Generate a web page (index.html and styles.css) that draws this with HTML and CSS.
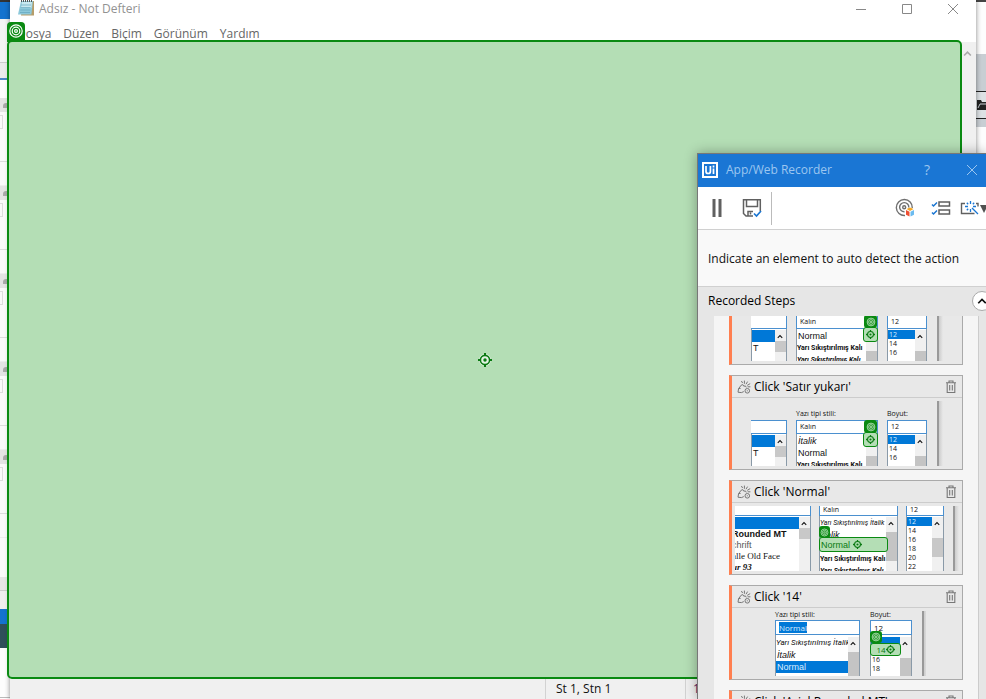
FILE: index.html
```html
<!DOCTYPE html>
<html lang="tr">
<head>
<meta charset="utf-8">
<title>Adsız - Not Defteri</title>
<link rel="stylesheet" href="styles.css">
</head>
<body>
<svg width="0" height="0" class="defs" aria-hidden="true">
  <symbol id="rings" viewBox="0 0 16 16"><g fill="none" stroke="currentColor" stroke-width="1.2"><circle cx="8" cy="8" r="6.2"/><circle cx="8" cy="8" r="3.8"/><circle cx="8" cy="8" r="1.4"/></g></symbol>
  <symbol id="aim" viewBox="0 0 14 14"><circle cx="7" cy="7" r="4.6" fill="none" stroke="currentColor" stroke-width="1.6"/><circle cx="7" cy="7" r="1.7" fill="currentColor"/><path d="M7 0v2.4M7 11.6V14M0 7h2.4M11.6 7H14" stroke="currentColor" stroke-width="2"/></symbol>
  <symbol id="up" viewBox="0 0 8 6"><path d="M1 4.8 4 1.8l3 3" fill="none" stroke="currentColor" stroke-width="1.4"/></symbol>
  <symbol id="click" viewBox="0 0 14 14"><g fill="none" stroke="currentColor"><path d="M4.2 5.2 1.6 8.6 1 12.2l3.4.4 2.4-1M4.2 5.2l1.6-.6 1 1.6 1.6-.3.9 1.5M1.6 8.6l2-.2"/><circle cx="10.3" cy="10.8" r="2.3"/><path d="M10.3 10.3v1M7.4 3.8V.6M9 4.2l1.6-2.6M10.2 5.4l3-1.800M5.600 3 4.400 1M10.600 6.800h2.800"/></g></symbol>
  <symbol id="trash" viewBox="0 0 12 14"><path d="M1 2.700h10M4 2.500V1h4v1.500M2.200 3v9.500h7.600V3M4.700 5v5.500M7.300 5v5.500" fill="none" stroke="currentColor" stroke-width="1.1"/></symbol>
</svg>
<main class="desktop">
  <div class="backdrop" aria-hidden="true">
    <i class="b-dark"></i><i class="b-blue"></i><i class="b-tabs"></i><i class="b-row"></i><i class="b-gap"></i>
    <i class="b-group"></i><i class="b-group"></i><i class="b-group"></i><i class="b-group"></i><i class="b-group"></i>
    <i class="b-foot"></i><i class="b-accent"></i><i class="b-teal"></i><i class="b-rest"></i>
  </div>
  <div class="backdrop backdrop-right" aria-hidden="true">
    <i class="r-top"></i><i class="r-grey"></i>
    <i class="r-folder"><svg width="10" height="12" viewBox="0 0 10 12"><path d="M1 1h4l1 2h4v8H1z" fill="#222"/><path d="M2 9 4 5h6" fill="none" stroke="#c8ced3"/></svg></i>
    <i class="r-end"></i>
  </div>

  <section class="notepad">
    <header class="np-title">
      <svg width="17" height="17" viewBox="0 0 17 17"><path d="M5 1h11v14.500H3z" fill="#b59d6a"/><path d="M3 1h12l-1.600 13.500H0z" fill="#8cc8da"/><path d="M4 2h10l-.7 6H3z" fill="#c8e8f0"/><path d="M3 5h10M2.700 7.500h10M2.300 10h10M2 12.500h10" stroke="#64a6bd" stroke-width=".7"/><path d="M3 1h12" stroke="#555" stroke-width="2" stroke-dasharray="1 1"/></svg>
      <h1>Adsız - Not Defteri</h1>
      <button aria-label="Simge durumuna küçült"><svg width="12" height="12"><path d="M1 6.500h10" stroke="#888"/></svg></button>
      <button aria-label="Ekranı kapla"><svg width="12" height="12"><path d="M1.500 1.500h9v9h-9z" fill="none" stroke="#888"/></svg></button>
      <button aria-label="Kapat"><svg width="12" height="12"><path d="m1 1 10 10M11 1 1 11" stroke="#888"/></svg></button>
    </header>
    <nav class="np-menu"><button>Dosya</button><button>Düzen</button><button>Biçim</button><button>Görünüm</button><button>Yardım</button></nav>
    <div class="np-body"><textarea aria-label="Metin"></textarea><div class="np-scroll"><svg width="9" height="7"><use href="#up"/></svg></div></div>
    <footer class="np-status"><span></span><span>St 1, Stn 1</span><span>100%</span></footer>
  </section>

  <div class="highlight">
    <span class="tag"><svg width="16" height="16"><use href="#rings"/></svg></span>
    <svg class="mid" width="14" height="14" viewBox="0 0 14 14"><circle cx="7" cy="7" r="6" fill="#e3f3e3"/><use href="#aim"/></svg>
  </div>

  <section class="recorder">
    <header class="rec-title">
      <svg width="16" height="16" viewBox="0 0 16 16" fill="none" stroke="#fff"><path d="M1 1h14v14H1z" stroke-width="2"/><path d="M4 4v5.500q0 2 2.200 2t2.200-2V4M11.500 6.500V12M11.500 3.500v2" stroke-width="1.700"/></svg>
      <h2>App/Web Recorder</h2>
      <button aria-label="Help">?</button>
      <button aria-label="Close"><svg width="12" height="12"><path d="m1 1 10 10M11 1 1 11" stroke="#9cc6f0"/></svg></button>
    </header>
    <div class="rec-tools">
      <button aria-label="Pause"><svg width="10" height="18"><path d="M2 0v18M8 0v18" stroke="#606060" stroke-width="3"/></svg></button>
      <button aria-label="Save"><svg width="20" height="20" viewBox="0 0 20 20" fill="none" stroke="#606060" stroke-width="1.500"><path d="M11 18H4l-2.500-2.500V1.700h16.800V13M4.500 2v6.500h11V2M6 18v-4.500h5M8.500 14.500v2"/><path d="m12 15.500 2.500 2.500 4.500-5" stroke="#1a76d2" stroke-width="1.700"/></svg></button>
      <i class="rule"></i>
      <button aria-label="Computer vision"><svg width="20" height="20" viewBox="0 0 20 20" fill="none" stroke="#707070" stroke-width="1.400"><path d="M10 17.500A8 8 0 1 1 17.300 10M9.500 13.800A4.600 4.600 0 1 1 13.800 9.500"/><circle cx="9.200" cy="9.300" r="1.500"/><g stroke="none"><path d="m11.500 11 3.500-1.500 3.500 1.500-3.500 2z" fill="#f5a623"/><path d="m11 12 3.500 1.700v4.800L11 16.800z" fill="#ee5034"/><path d="m15.500 13.700 3.500-1.700v4.800l-3.500 1.700z" fill="#6cbcf0"/></g></svg></button>
      <button aria-label="Steps"><svg width="20" height="16" viewBox="0 0 20 16" fill="none"><path d="M8 2h10.500v4H8zM8 10h10.500v4H8z" stroke="#606060" stroke-width="1.500"/><path d="m1 4.500 1.500 1.500L6 2.500M1 12.500 2.500 14 6 10.500" stroke="#1a76d2" stroke-width="1.500"/></svg></button>
      <button aria-label="Options" class="last"><svg width="26" height="16" viewBox="0 0 26 16" fill="none"><path d="M5 3.500H1.500v10h13M16 3.500h2v3" stroke="#606060" stroke-width="1.400"/><path d="M10.500 1v3M10.500 9v3M5 6.500h3M13 6.500h3M6.800 2.800l1.400 1.400M14.200 2.800l-1.400 1.400M6.800 10.200l1.400-1.400M12 8l6 6" stroke="#1a76d2" stroke-width="1.300"/><path d="M20 5h8l-4 8z" fill="#505050"/></svg></button>
    </div>
    <p class="rec-hint">Indicate an element to auto detect the action</p>
    <div class="rec-head"><h3>Recorded Steps</h3><button aria-label="Collapse"><svg width="10" height="8" viewBox="0 0 8 6"><use href="#up"/></svg></button></div>
    <div class="rec-list">
      <ol>
        <li class="step">
          <div class="step-head"></div>
          <div class="shot font-shot">
            <div class="col c-face"><b class="cap"></b><span class="field"></span><div class="box"><ul><li class="sel"></li><li>T</li></ul><i class="bar"><svg width="6" height="5"><use href="#up"/></svg></i></div></div>
            <div class="col c-style"><b class="cap"></b><span class="field">Kalın</span><div class="box"><ul><li>Normal</li><li class="narrow bold">Yarı Sıkıştırılmış Kalı</li><li class="narrow bold ital">Yarı Sıkıştırılmış Kalı</li></ul><i class="bar low"></i></div><span class="mark"><svg width="10" height="10"><use href="#rings"/></svg></span><span class="hit"><svg width="9" height="9"><use href="#aim"/></svg></span></div>
            <div class="col c-size"><b class="cap"></b><span class="field">12</span><div class="box tight"><ul><li class="sel">12</li><li>14</li><li>16</li></ul><i class="bar low"><svg width="6" height="5"><use href="#up"/></svg></i></div></div>
            <i class="edge"></i>
          </div>
        </li>
        <li class="step">
          <div class="step-head"><svg width="14" height="14"><use href="#click"/></svg><h4>Click 'Satır yukarı'</h4><button aria-label="Delete"><svg width="12" height="14"><use href="#trash"/></svg></button></div>
          <div class="shot font-shot">
            <div class="col c-face"><b class="cap"></b><span class="field"></span><div class="box"><ul><li class="sel"></li><li>T</li></ul><i class="bar"><svg width="6" height="5"><use href="#up"/></svg></i></div></div>
            <div class="col c-style"><b class="cap">Yazı tipi stili:</b><span class="field">Kalın</span><div class="box"><ul><li class="ital">İtalik</li><li>Normal</li><li class="narrow bold">Yarı Sıkıştırılmış Kalı</li></ul><i class="bar low"></i></div><span class="mark"><svg width="10" height="10"><use href="#rings"/></svg></span><span class="hit"><svg width="9" height="9"><use href="#aim"/></svg></span></div>
            <div class="col c-size"><b class="cap">Boyut:</b><span class="field">12</span><div class="box tight"><ul><li class="sel">12</li><li>14</li><li>16</li></ul><i class="bar low"><svg width="6" height="5"><use href="#up"/></svg></i></div></div>
            <i class="edge"></i>
          </div>
        </li>
        <li class="step">
          <div class="step-head"><svg width="14" height="14"><use href="#click"/></svg><h4>Click 'Normal'</h4><button aria-label="Delete"><svg width="12" height="14"><use href="#trash"/></svg></button></div>
          <div class="shot normal-shot">
            <div class="col c-face"><span class="field"></span><div class="box"><ul><li class="sel"></li><li class="bold">Rounded MT</li><li class="light">chrift</li><li class="serif">alle Old Face</li><li class="serif bold ital">ur 93</li></ul><i class="bar"><svg width="6" height="5"><use href="#up"/></svg></i></div></div>
            <div class="col c-style"><span class="field">Kalın</span><div class="box"><ul><li class="narrow ital">Yarı Sıkıştırılmış İtalik</li><li class="ital">İtalik</li><li></li><li class="narrow bold">Yarı Sıkıştırılmış Kalı</li><li class="narrow bold ital">Yarı Sıkıştırılmış Kalı</li></ul><i class="bar tall"><svg width="6" height="5"><use href="#up"/></svg></i></div><span class="mark"><svg width="9" height="9"><use href="#rings"/></svg></span><span class="hit">Normal <svg width="9" height="9"><use href="#aim"/></svg></span></div>
            <div class="col c-size"><span class="field">12</span><div class="box tight"><ul><li class="sel">12</li><li>14</li><li>16</li><li>18</li><li>20</li><li>22</li></ul><i class="bar mid-bar"><svg width="6" height="5"><use href="#up"/></svg></i></div></div>
            <i class="edge"></i>
          </div>
        </li>
        <li class="step">
          <div class="step-head"><svg width="14" height="14"><use href="#click"/></svg><h4>Click '14'</h4><button aria-label="Delete"><svg width="12" height="14"><use href="#trash"/></svg></button></div>
          <div class="shot size-shot">
            <div class="col c-style"><b class="cap">Yazı tipi stili:</b><span class="field"><mark>Normal</mark></span><div class="box"><ul><li class="narrow ital">Yarı Sıkıştırılmış İtalik</li><li class="ital">İtalik</li><li class="sel">Normal</li></ul><i class="bar tall"><svg width="6" height="5"><use href="#up"/></svg></i></div></div>
            <div class="col c-size"><b class="cap">Boyut:</b><span class="field">12</span><div class="box tight"><ul><li class="sel"></li><li></li><li>16</li><li>18</li></ul><i class="bar low"><svg width="6" height="5"><use href="#up"/></svg></i></div><span class="mark"><svg width="10" height="10"><use href="#rings"/></svg></span><span class="hit">14<svg width="9" height="9"><use href="#aim"/></svg></span></div>
            <i class="edge"></i>
          </div>
        </li>
        <li class="step">
          <div class="step-head"><svg width="14" height="14"><use href="#click"/></svg><h4>Click 'Arial Rounded MT'</h4><button aria-label="Delete"><svg width="12" height="14"><use href="#trash"/></svg></button></div>
        </li>
      </ol>
    </div>
  </section>
</main>
</body>
</html>
```
FILE: styles.css
```css
* { box-sizing: border-box; }
body { margin: 0; font: 12px/16px "Open Sans", "Noto Sans", sans-serif; color: #111; }
h1, h2, h3, h4, p, ol, ul { margin: 0; padding: 0; font-size: inherit; font-weight: inherit; list-style: none; }
button { display: flex; align-items: center; justify-content: center; flex: none; margin: 0; padding: 0; border: 0; background: none; font: inherit; color: inherit; }
svg { display: block; flex: none; }
i { font-style: normal; }
.defs { position: absolute; }
.desktop { position: relative; height: 100vh; overflow: hidden; background: #fdfdfd; }

/* Windows behind the editor */
.backdrop { position: absolute; left: 0; top: 0; bottom: 0; width: 10px; display: flex; flex-direction: column; }
.backdrop i { flex: none; }
.b-dark { height: 2px; background: #333; }
.b-blue { height: 17px; background: #1473cf; }
.b-tabs { height: 44px; background: #f4f4f4; border-bottom: 1px solid #ccc; }
.b-row { height: 17px; background: #ebebeb; border-bottom: 2px solid #4b86c6; }
.b-gap { height: 18px; }
.b-group { height: 88px; border-bottom: 1px solid #eee; background: linear-gradient(#e4e4e4 14px, #fafafa 14px 63px, #ddd 63px 64px, #fafafa 64px); }
.b-group::before { content: ""; display: block; width: 4px; height: 5px; margin: 5px 0 0 3px; background: #aaa; border-radius: 3px 0 0; }
.b-group::after { content: ""; display: block; width: 2px; height: 12px; margin-top: 7px; border: 1px solid #ddd; border-left: 0; }
.b-foot { height: 71px; background: linear-gradient(#fafafa 39px, #e6e6e6 39px 52px, #ccc 52px 53px, #eee 53px); }
.b-accent { height: 15px; background: #1473cf; }
.b-teal { height: 24px; background: #2f4f5a; }
.b-rest { height: 50px; border-bottom: 1px solid #bbb; }
.backdrop-right { left: auto; right: 0; }
.r-top { height: 56px; border-top: 2px solid #444; border-bottom: 2px solid #c8ced3; }
.r-grey { height: 36px; background: #c8ced3; border-bottom: 1px solid #222; }
.r-folder { height: 27px; padding-top: 7px; background: #dde1e4; border-bottom: 1px solid #222; }
.r-end { height: 8px; background: #c8ced3; }

/* Editor window */
.notepad { position: absolute; inset: 0 10px 0 10px; display: flex; flex-direction: column; background: #fff; box-shadow: 0 0 5px #0007; }
.np-title { display: flex; align-items: center; height: 17px; margin-bottom: 9px; padding-left: 8px; color: #929292; }
.np-title h1 { flex: 1; margin-left: 4px; }
.np-title button { width: 46px; }
.np-menu { display: flex; gap: 12px; height: 16px; padding-left: 7px; color: #666; }
.np-body { display: flex; flex: 1; }
.np-body textarea { flex: 1; border: 0; resize: none; outline: 0; }
.np-scroll { width: 15px; padding: 8px 0 0 2px; background: #f0f0f0; color: #aaa; }
.np-status { display: grid; grid-template-columns: 1fr 140px 291px; height: 20px; background: #f0f0f0; line-height: 20px; }
.np-status span + span { padding-left: 10px; border-left: 1px solid #d2d2d2; }
.np-status span:last-child { padding-left: 7px; color: #5c2560; }

/* Target highlight */
.highlight { position: absolute; inset: 40px 24px 20px 7px; display: grid; place-items: center; border: 2px solid #0a8a12; border-radius: 5px; background: #b4deb5; color: #0a7a12; }
.tag { position: absolute; left: -2px; top: -20px; width: 18px; height: 20px; padding: 1px; border-radius: 4px 4px 0 0; background: #0a8a12; color: #fff; }

/* Recorder window */
.recorder { position: absolute; top: 153px; right: 0; bottom: 0; width: 289px; display: flex; flex-direction: column; border: solid #777; border-width: 1px 0 0 1px; background: #e6e6e6; box-shadow: 0 0 12px #0005; overflow: hidden; }
.rec-title { display: flex; align-items: center; flex: none; height: 33px; padding: 0 0 2px 4px; background: #1a76d4; color: #9cc6f0; }
.rec-title h2 { flex: 1; margin-left: 8px; }
.rec-title button { width: 46px; font-size: 14px; }
.rec-title button:last-child { width: 28px; margin-left: 8px; }
.rec-tools { display: flex; align-items: center; flex: none; height: 43px; padding-left: 14px; background: #fff; border-bottom: 1px solid #d0d0d0; }
.rec-tools button + button { margin-left: 16px; }
.rec-tools button:nth-child(2) { margin-left: 20px; }
.rec-tools .rule { height: 33px; margin: 0 auto 0 9px; border-left: 1px solid #bbb; }
.rec-tools button.last { margin-left: 9px; }
.rec-hint { flex: none; height: 57px; padding-left: 10px; background: #f9f9f9; border-bottom: 1px solid #d0d0d0; line-height: 57px; }
.rec-head { display: flex; align-items: center; justify-content: space-between; flex: none; height: 29px; padding: 0 0 1px 10px; }
.rec-head h3, .step h4 { font-weight: 500; color: #000; }
.rec-head button { width: 20px; height: 20px; margin-right: -6px; border: 1px solid #aaa; border-radius: 50%; background: #fff; }
.rec-list { flex: 1; min-height: 0; padding: 0 7px 0 16px; overflow: hidden; }
.rec-list ol { display: flex; flex-direction: column; gap: 10px; margin-top: -46px; padding: 0 15px; background: #f5f5f5; border-right: 1px solid #ccc; }
.step { height: 95px; border: 1px solid #aaa; border-left: 3px solid #ff7f50; background: #e8e8e8; }
.step-head { display: flex; align-items: center; height: 22px; padding: 0 5px; border-bottom: 1px solid #ccc; color: #777; }
.step h4 { flex: 1; margin-left: 3px; }

/* Step thumbnails */
.shot { display: flex; height: 65px; margin: 3px auto 0; overflow: hidden; font: 9px/12px "Liberation Sans", sans-serif; }
.shot i, .shot span { flex: none; }
.font-shot { width: 192px; gap: 9px; }
.normal-shot { width: 224px; gap: 8px; }
.size-shot { width: 158px; gap: 10px; padding-left: 7px; }
.col { position: relative; flex: none; display: flex; flex-direction: column; }
.cap { height: 19px; padding-top: 8px; font: 7px/10px "Open Sans", sans-serif; white-space: nowrap; }
.field { height: 14px; padding-left: 3px; border: 1px solid #4b90cf; background: #fff; font: 7px/12px "Open Sans", sans-serif; }
.box { display: flex; flex: 1; min-height: 0; padding-top: 1px; border: solid #8a9aa8; border-width: 0 1px; background: #fff; }
.box ul { flex: 1; min-width: 0; overflow: hidden; white-space: nowrap; }
.box li { height: 12px; padding-left: 1px; }
.box .narrow { padding-left: 0; font-family: Roboto, "Liberation Sans", sans-serif; font-size: 7px; }
.tight li { height: 9px; font: 7px/9px "Open Sans", sans-serif; }
.box .sel { background: #0078d7; color: #d8ecff; }
.bar { width: 11px; padding: 4px 0 0 2px; background: linear-gradient(#f0f0f0 11px, #c8c8c8 11px 22px, #f0f0f0 22px); }
.bar.low { background: linear-gradient(#f0f0f0 21px, #c4c4c4 21px); }
.bar.tall { background: linear-gradient(#f0f0f0 15px, #c4c4c4 15px 44px, #f0f0f0 44px); }
.bar.mid-bar { background: linear-gradient(#f0f0f0 21px, #c8c8c8 21px 40px, #f0f0f0 40px); }
.edge { width: 6px; margin-left: auto; background: linear-gradient(90deg, #999 2px, #ccc 2px, #e8e8e8); }
.bold { font-weight: bold; }
.ital { font-style: italic; }
.light { color: #555; }
.serif { font-family: "Liberation Serif", serif; }
.font-shot .c-face, .font-shot .c-face .field { border-left: 0; }
.font-shot .c-face { width: 36px; }
.font-shot .c-style { width: 82px; }
.font-shot .c-size { width: 40px; }
.mark, .hit { position: absolute; display: flex; align-items: center; justify-content: center; background: #0a8a12; color: #d5f0d6; border-radius: 3px; }
.hit { border: 1px solid #0a8a12; background: #b4deb5; color: #0a7a12; }
.font-shot .mark { right: 1px; top: 19px; width: 13px; height: 13px; }
.font-shot .hit { right: 0; top: 31px; width: 15px; height: 15px; }
.normal-shot .field { height: 10px; border-top: 0; line-height: 7px; }
.normal-shot .c-face { width: 76px; }
.normal-shot .c-face .box, .normal-shot .c-face .field { border-left: 0; }
.normal-shot .c-style { width: 79px; }
.normal-shot .c-size { width: 38px; }
.normal-shot .c-face li { padding-left: 0; text-indent: -3px; }
.normal-shot .c-face li:nth-child(n+2) { height: 11px; line-height: 11px; }
.normal-shot .mark { left: 0; top: 20px; width: 11px; height: 12px; }
.normal-shot .hit { left: 0; top: 31px; width: 69px; height: 15px; padding-left: 1px; gap: 3px; justify-content: flex-start; }
.size-shot .cap { height: 9px; padding-top: 0; line-height: 7px; }
.size-shot .field { height: 15px; font-size: 8px; line-height: 13px; }
.size-shot mark { background: #0078d7; color: #d8ecff; }
.size-shot .c-style { width: 85px; }
.size-shot .c-size { width: 42px; }
.size-shot .box { padding-top: 2px; }
.size-shot .box .narrow { font-size: 8px; }
.size-shot .mark { left: 0; top: 20px; width: 12px; height: 12px; }
.size-shot .hit { left: 0; top: 32px; width: 31px; height: 13px; font: 8px/10px "Open Sans", sans-serif; }
```
